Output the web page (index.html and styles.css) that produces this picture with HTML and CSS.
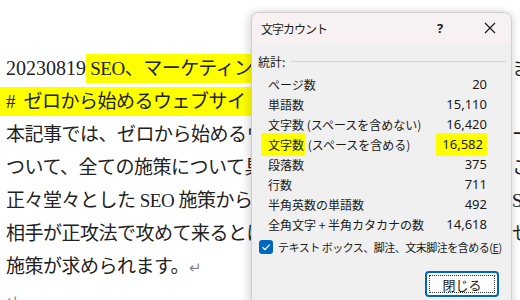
FILE: index.html
```html
<!DOCTYPE html>
<html lang="ja">
<head>
    <meta charset="UTF-8">
    <meta name="viewport" content="width=device-width, initial-scale=1.0">
    <title>文字カウント</title>
    <link rel="stylesheet" href="styles.css">
</head>
<body>

    <div class="doc">
        <div class="line"><span class="txt"><span class="latin">20230819</span><span class="hl"> SEO、マーケティング戦略の考え方について</span></span><span class="tail">ま</span></div>
        <div class="line"><span class="txt"><span class="hl">#&nbsp;&nbsp;ゼロから始めるウェブサイト集客の基本と施策一覧</span></span></div>
        <div class="line"><span class="txt">本記事では、ゼロから始めるウェブ集客の方法を解説し</span><span class="tail">ー</span></div>
        <div class="line"><span class="txt">ついて、全ての施策について具体的にまとめていきます</span><span class="tail">こ</span></div>
        <div class="line"><span class="txt">正々堂々とした SEO 施策から始めて、最新の手法まで</span><span class="tail">S</span></div>
        <div class="line"><span class="txt">相手が正攻法で攻めて来るとは限らないため、柔軟な</span><span class="tail">せ</span></div>
        <div class="line"><span class="txt">施策が求められます。<span class="mark">↵</span></span></div>
        <div class="line"><span class="txt"><span class="mark">↵</span></span></div>
    </div>

    <div class="dialog">
        <div class="titlebar">
            <span class="title">文字カウント</span>
            <span class="help">?</span>
            <span class="close">
                <svg width="12" height="12" viewBox="0 0 12 12">
                    <path d="M1 1 L11 11 M11 1 L1 11" stroke="#1a1a1a" stroke-width="1.2" fill="none"/>
                </svg>
            </span>
        </div>
        <div class="body">
            <div class="group">
                <span>統計:</span>
                <span class="rule"></span>
            </div>
            <div class="stats">
                <span class="label">ページ数</span><span class="num">20</span>
                <span class="label">単語数</span><span class="num">15,110</span>
                <span class="label">文字数 (スペースを含めない)</span><span class="num">16,420</span>
                <span class="label"><span class="mark-label">文字数</span> (スペースを含める)</span><span class="num"><span class="mark-num">16,582</span></span>
                <span class="label">段落数</span><span class="num">375</span>
                <span class="label">行数</span><span class="num">711</span>
                <span class="label">半角英数の単語数</span><span class="num">492</span>
                <span class="label">全角文字&nbsp;+&nbsp;半角カタカナの数</span><span class="num">14,618</span>
            </div>
            <label class="check">
                <span class="box">
                    <svg width="10" height="10" viewBox="0 0 10 10">
                        <path d="M1.5 5.2 L4 7.6 L8.6 2.6" stroke="#fff" stroke-width="1.3" fill="none"/>
                    </svg>
                </span>
                <span>テキスト ボックス、脚注、文末脚注を含める(<u>E</u>)</span>
            </label>
            <div class="actions">
                <button type="button">閉じる</button>
            </div>
        </div>
    </div>

</body>
</html>
```

FILE: styles.css
```css
body {
    margin: 0;
    background-color: #ffffff;
    overflow: hidden;
}
.doc {
    padding: 52px 0 0 6px;
    font-family: "Liberation Serif", "Noto Sans CJK JP", serif;
    font-size: 19px;
    color: #222;
}
.line {
    display: flex;
    line-height: 33px;
    height: 33px;
    white-space: nowrap;
    letter-spacing: -0.5px;
}
.txt {
    flex: none;
    width: 506px;
    overflow: hidden;
}
.tail {
    flex: none;
}
.latin {
    font-size: 20px;
    letter-spacing: 0;
}
.hl {
    background-color: #ffff00;
    padding: 4px 0;
}
.line:nth-child(2) {
    margin-left: -6px;
}
.line:nth-child(2) .hl {
    padding-left: 6px;
}
.line:nth-child(2) .txt {
    width: 512px;
}
.mark {
    color: #888;
    font-size: 15px;
}
.dialog {
    position: absolute;
    left: 251px;
    top: 12px;
    width: 259px;
    height: 300px;
    border: 1px solid #cfcfcf;
    border-radius: 8px;
    background-color: #f0f0f0;
    box-shadow: -3px 0 8px rgba(0, 0, 0, 0.14), 3px 0 6px rgba(0, 0, 0, 0.08);
    font-family: "Noto Sans CJK JP", sans-serif;
    font-size: 12px;
    color: #1a1a1a;
    overflow: hidden;
}
.titlebar {
    display: flex;
    align-items: center;
    height: 30px;
    padding: 0 0 0 9px;
    background-color: #f7f2f1;
}
.title {
    flex: 1;
    letter-spacing: -1px;
}
.help {
    font-family: "Noto Sans", sans-serif;
    font-size: 13px;
    font-weight: bold;
    width: 30px;
    text-align: center;
    margin-right: 23px;
}
.close {
    display: flex;
    width: 24px;
    margin-right: 9px;
    justify-content: center;
}
.body {
    padding: 8px 5px 0 6px;
}
.group {
    display: flex;
    align-items: center;
    gap: 6px;
    height: 20px;
}
.rule {
    flex: 1;
    border-top: 1px solid #d6d6d6;
}
.stats {
    display: grid;
    grid-template-columns: 1fr auto;
    grid-auto-rows: 20px;
    align-items: center;
    margin: 3px 19px 0 10px;
}
.num {
    font-family: "Noto Sans", sans-serif;
    font-size: 13px;
    text-align: right;
}
.mark-label {
    background-color: #ffff00;
    margin-left: -7px;
    padding: 3px 1px 3px 7px;
}
.mark-num {
    background-color: #ffff00;
    padding: 2px 4px 3px 6px;
}
.check {
    display: flex;
    align-items: center;
    gap: 5px;
    margin: 5px 0 0 1px;
    font-size: 11px;
    letter-spacing: -0.5px;
    white-space: nowrap;
}
.box {
    display: flex;
    align-items: center;
    justify-content: center;
    flex: none;
    width: 14px;
    height: 14px;
    border-radius: 3px;
    background-color: #0067c0;
}
.actions {
    display: flex;
    justify-content: flex-end;
    margin: 16px 7px 0 0;
}
button {
    width: 74px;
    height: 26px;
    border: 2px solid #0067c0;
    border-radius: 4px;
    background-color: #fdfdfd;
    font-family: "Noto Sans CJK JP", sans-serif;
    font-size: 13px;
    color: #1a1a1a;
    outline: 1px dotted #333;
    outline-offset: -5px;
    padding: 0;
}
```
